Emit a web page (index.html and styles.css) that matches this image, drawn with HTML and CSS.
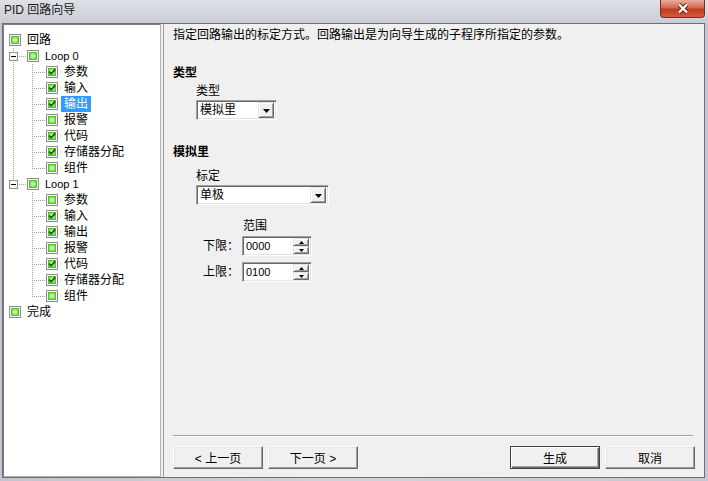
FILE: index.html
```html
<!DOCTYPE html>
<html lang="zh-CN">
<head>
  <meta charset="UTF-8">
  <title>PID 回路向导</title>
  <link rel="stylesheet" href="styles.css">
</head>
<body>

<svg class="defs" width="0" height="0">
  <defs>
    <radialGradient id="leaf" cx="50%" cy="50%" r="60%">
      <stop offset="0" stop-color="#d4fbb6"/>
      <stop offset="1" stop-color="#68d443"/>
    </radialGradient>
    <symbol id="box" viewBox="0 0 12 12">
      <rect x="0.5" y="0.5" width="11" height="11" fill="#fbfbfb" stroke="#8d8d8d"/>
      <rect x="2.5" y="2.5" width="7" height="7" fill="url(#leaf)" stroke="#52c22f"/>
    </symbol>
    <symbol id="check" viewBox="0 0 12 12">
      <rect x="0.5" y="0.5" width="11" height="11" fill="#fbfbfb" stroke="#8d8d8d"/>
      <rect x="2.5" y="2.5" width="7" height="7" fill="url(#leaf)" stroke="#52c22f"/>
      <path d="M3.2 5.6 L5.2 7.8 L9.2 3.4" fill="none" stroke="#0d5e12" stroke-width="1.7"/>
    </symbol>
  </defs>
</svg>

<div class="window">
  <div class="titlebar">
    <span class="title">PID 回路向导</span>
    <span class="close-btn">
      <svg width="12" height="11" viewBox="0 0 12 11">
        <path d="M2 1.5 L10 9.5 M10 1.5 L2 9.5" stroke="#5a1c14" stroke-width="4"/>
        <path d="M2 1.5 L10 9.5 M10 1.5 L2 9.5" stroke="#fff" stroke-width="2.4"/>
      </svg>
    </span>
  </div>

  <div class="client">
    <!-- tree of wizard steps -->
    <div class="tree">
      <div class="row"><svg class="node root-node"><use href="#box"/></svg><span class="label">回路</span></div>

      <div class="row"><span class="guide link tee"><span class="expander"></span></span><svg class="node"><use href="#box"/></svg><span class="label latin">Loop 0</span></div>
      <div class="row"><span class="guide pipe"></span><span class="guide link tee"></span><svg class="node"><use href="#check"/></svg><span class="label">参数</span></div>
      <div class="row"><span class="guide pipe"></span><span class="guide link tee"></span><svg class="node"><use href="#check"/></svg><span class="label">输入</span></div>
      <div class="row"><span class="guide pipe"></span><span class="guide link tee"></span><svg class="node"><use href="#check"/></svg><span class="label selected">输出</span></div>
      <div class="row"><span class="guide pipe"></span><span class="guide link tee"></span><svg class="node"><use href="#box"/></svg><span class="label">报警</span></div>
      <div class="row"><span class="guide pipe"></span><span class="guide link tee"></span><svg class="node"><use href="#check"/></svg><span class="label">代码</span></div>
      <div class="row"><span class="guide pipe"></span><span class="guide link tee"></span><svg class="node"><use href="#check"/></svg><span class="label">存储器分配</span></div>
      <div class="row"><span class="guide pipe"></span><span class="guide link elbow"></span><svg class="node"><use href="#box"/></svg><span class="label">组件</span></div>

      <div class="row"><span class="guide link elbow"><span class="expander"></span></span><svg class="node"><use href="#box"/></svg><span class="label latin">Loop 1</span></div>
      <div class="row"><span class="guide"></span><span class="guide link tee"></span><svg class="node"><use href="#box"/></svg><span class="label">参数</span></div>
      <div class="row"><span class="guide"></span><span class="guide link tee"></span><svg class="node"><use href="#check"/></svg><span class="label">输入</span></div>
      <div class="row"><span class="guide"></span><span class="guide link tee"></span><svg class="node"><use href="#check"/></svg><span class="label">输出</span></div>
      <div class="row"><span class="guide"></span><span class="guide link tee"></span><svg class="node"><use href="#box"/></svg><span class="label">报警</span></div>
      <div class="row"><span class="guide"></span><span class="guide link tee"></span><svg class="node"><use href="#check"/></svg><span class="label">代码</span></div>
      <div class="row"><span class="guide"></span><span class="guide link tee"></span><svg class="node"><use href="#check"/></svg><span class="label">存储器分配</span></div>
      <div class="row"><span class="guide"></span><span class="guide link elbow"></span><svg class="node"><use href="#box"/></svg><span class="label">组件</span></div>

      <div class="row"><svg class="node root-node"><use href="#box"/></svg><span class="label">完成</span></div>
    </div>

    <!-- output settings page -->
    <div class="panel">
      <div class="desc">指定回路输出的标定方式。回路输出是为向导生成的子程序所指定的参数。</div>

      <div class="group-title">类型</div>
      <div class="field">
        <div class="field-label">类型</div>
        <div class="select select-type">
          <span class="select-value">模拟里</span>
          <span class="drop-btn"><svg width="7" height="4"><polygon points="0,0 7,0 3.5,4" fill="#000"/></svg></span>
        </div>
      </div>

      <div class="group-title second">模拟里</div>
      <div class="field">
        <div class="field-label scale-label">标定</div>
        <div class="select select-scale">
          <span class="select-value">单极</span>
          <span class="drop-btn"><svg width="7" height="4"><polygon points="0,0 7,0 3.5,4" fill="#000"/></svg></span>
        </div>

        <div class="range-title">范围</div>
        <div class="spin-row">
          <span class="spin-label">下限：</span>
          <div class="spin">
            <span class="spin-value">0000</span>
            <span class="spin-btns">
              <span class="spin-btn"><svg width="5" height="3"><polygon points="2.5,0 5,3 0,3" fill="#000"/></svg></span>
              <span class="spin-btn"><svg width="5" height="3"><polygon points="0,0 5,0 2.5,3" fill="#000"/></svg></span>
            </span>
          </div>
        </div>
        <div class="spin-row second">
          <span class="spin-label">上限：</span>
          <div class="spin">
            <span class="spin-value">0100</span>
            <span class="spin-btns">
              <span class="spin-btn"><svg width="5" height="3"><polygon points="2.5,0 5,3 0,3" fill="#000"/></svg></span>
              <span class="spin-btn"><svg width="5" height="3"><polygon points="0,0 5,0 2.5,3" fill="#000"/></svg></span>
            </span>
          </div>
        </div>
      </div>

      <div class="footer">
        <div class="separator"></div>
        <div class="buttons">
          <button class="btn">&lt; 上一页</button>
          <button class="btn">下一页 &gt;</button>
          <span class="spacer"></span>
          <button class="btn btn-default">生成</button>
          <button class="btn">取消</button>
        </div>
      </div>
    </div>
  </div>
</div>

</body>
</html>
```

FILE: styles.css
```css
* {
  box-sizing: border-box;
}
body {
  margin: 0;
  font-family: "Liberation Sans", "Noto Sans CJK SC", sans-serif;
  font-size: 12px;
  color: #000;
}
.defs {
  position: absolute;
}
.window {
  width: 708px;
  height: 481px;
  display: flex;
  flex-direction: column;
  background: linear-gradient(to right, #c6c4d0, #d3d1db 50%, #c8c6d2);
}
.titlebar {
  height: 23px;
  display: flex;
  justify-content: space-between;
  align-items: flex-start;
  background: linear-gradient(to bottom, #dfe1e6, #c9ccd4);
}
.title {
  padding: 2px 0 0 4px;
  line-height: 16px;
  font-size: 12px;
  color: #1a1a1a;
}
.close-btn {
  width: 45px;
  height: 18px;
  margin-right: 3px;
  border: 1px solid #7c2e24;
  border-top: none;
  border-radius: 0 0 4px 4px;
  background: linear-gradient(to bottom, #e9ad9e, #d7664d 45%, #c13b21 55%, #d25c3f);
  display: flex;
  align-items: center;
  justify-content: center;
}

.client {
  flex: 1;
  display: flex;
  margin: 0 3px 3px 2px;
  border: 1px solid #6d6f73;
  background: #f0f0f0;
}

/* tree */
.tree {
  width: 158px;
  background: #fff;
  border: 1px solid;
  border-color: #7d7f84 #b4b4b4 #b4b4b4 #7d7f84;
  padding-top: 7px;
  font-size: 12px;
}
.row {
  display: flex;
  align-items: center;
  height: 16px;
}
.guide {
  flex: none;
  width: 19px;
  height: 16px;
  display: flex;
  align-items: center;
  padding-left: 5px;
  background-repeat: no-repeat;
}
.guide.link {
  width: 23px;
}
.pipe {
  background-image: repeating-linear-gradient(to bottom, #a0a0a0 0 1px, transparent 1px 2px);
  background-size: 1px 100%;
  background-position: 9px 0;
}
.tee {
  background-image:
    repeating-linear-gradient(to bottom, #a0a0a0 0 1px, transparent 1px 2px),
    repeating-linear-gradient(to right, #a0a0a0 0 1px, transparent 1px 2px);
  background-size: 1px 100%, 14px 1px;
  background-position: 9px 0, 9px 8px;
}
.elbow {
  background-image:
    repeating-linear-gradient(to bottom, #a0a0a0 0 1px, transparent 1px 2px),
    repeating-linear-gradient(to right, #a0a0a0 0 1px, transparent 1px 2px);
  background-size: 1px 9px, 14px 1px;
  background-position: 9px 0, 9px 8px;
}
.expander {
  width: 9px;
  height: 9px;
  border: 1px solid #919191;
  background: linear-gradient(#fff, #f3f3f3) no-repeat;
  display: flex;
  align-items: center;
  justify-content: center;
}
.expander::before {
  content: "";
  width: 5px;
  height: 1px;
  background: #000;
}
.node {
  flex: none;
  width: 12px;
  height: 12px;
}
.root-node {
  margin-left: 5px;
}
.label {
  margin-left: 3px;
  padding: 0 3px;
  line-height: 16px;
  white-space: nowrap;
}
.latin {
  font-size: 11px;
}
.selected {
  background: #3399ff;
  color: #fff;
}

/* right page */
.panel {
  flex: 1;
  display: flex;
  flex-direction: column;
  margin-left: 2px;
  border-left: 1px solid #a0a0a0;
  padding: 3px 9px 8px 9px;
}
.desc {
  line-height: 16px;
}
.group-title {
  margin-top: 22px;
  line-height: 16px;
  font-weight: bold;
}
.group-title.second {
  margin-top: 24px;
}
.field {
  margin-left: 23px;
}
.field-label {
  margin-top: 2px;
  line-height: 16px;
}
.scale-label {
  margin-top: 8px;
}

.select, .spin {
  display: flex;
  align-items: center;
  background: #fff;
  border: 1px solid;
  border-color: #a0a0a0 #fff #fff #a0a0a0;
  box-shadow: inset 1px 1px 0 #696969, inset -1px -1px 0 #e3e3e3;
  padding: 2px;
}
.select {
  margin-top: 1px;
  height: 20px;
}
.select-type {
  width: 81px;
}
.select-scale {
  width: 133px;
}
.select-value {
  flex: 1;
  padding-left: 1px;
  line-height: 16px;
}
.drop-btn, .spin-btn {
  display: flex;
  align-items: center;
  justify-content: center;
  background: #f0f0f0;
  border: 1px solid;
  border-color: #e3e3e3 #696969 #696969 #e3e3e3;
  box-shadow: inset 1px 1px 0 #fff, inset -1px -1px 0 #a0a0a0;
}
.drop-btn {
  width: 16px;
  height: 16px;
}
.drop-btn svg {
  margin-top: 1px;
}

.range-title {
  margin: 13px 0 0 47px;
  line-height: 16px;
}
.spin-row {
  display: flex;
  align-items: center;
  margin-top: 2px;
}
.spin-row.second {
  margin-top: 6px;
}
.spin-label {
  width: 46px;
  padding-left: 7px;
  line-height: 16px;
}
.spin {
  width: 70px;
  height: 20px;
}
.spin-value {
  flex: 1;
  font-size: 11px;
  padding-left: 1px;
}
.spin-btns {
  display: flex;
  flex-direction: column;
  width: 16px;
  height: 16px;
}
.spin-btn {
  flex: 1;
}

/* footer */
.footer {
  margin-top: auto;
}
.separator {
  height: 2px;
  margin-right: 2px;
  border-top: 1px solid #a0a0a0;
  border-bottom: 1px solid #fff;
  margin-bottom: 9px;
}
.buttons {
  display: flex;
  gap: 5px;
}
.spacer {
  flex: 1;
}
.btn {
  width: 90px;
  height: 23px;
  padding: 0;
  font-family: "Liberation Sans", "Noto Sans CJK SC", sans-serif;
  font-size: 12px;
  color: #000;
  background: #f0f0f0;
  border: 1px solid;
  border-color: #fff #696969 #696969 #fff;
  box-shadow: inset -1px -1px 0 #a0a0a0, inset 1px 1px 0 #e3e3e3;
}
.btn-default {
  border-color: #404040;
  box-shadow: inset 1px 1px 0 #fff, inset -1px -1px 0 #696969, inset -2px -2px 0 #a0a0a0;
}
```
